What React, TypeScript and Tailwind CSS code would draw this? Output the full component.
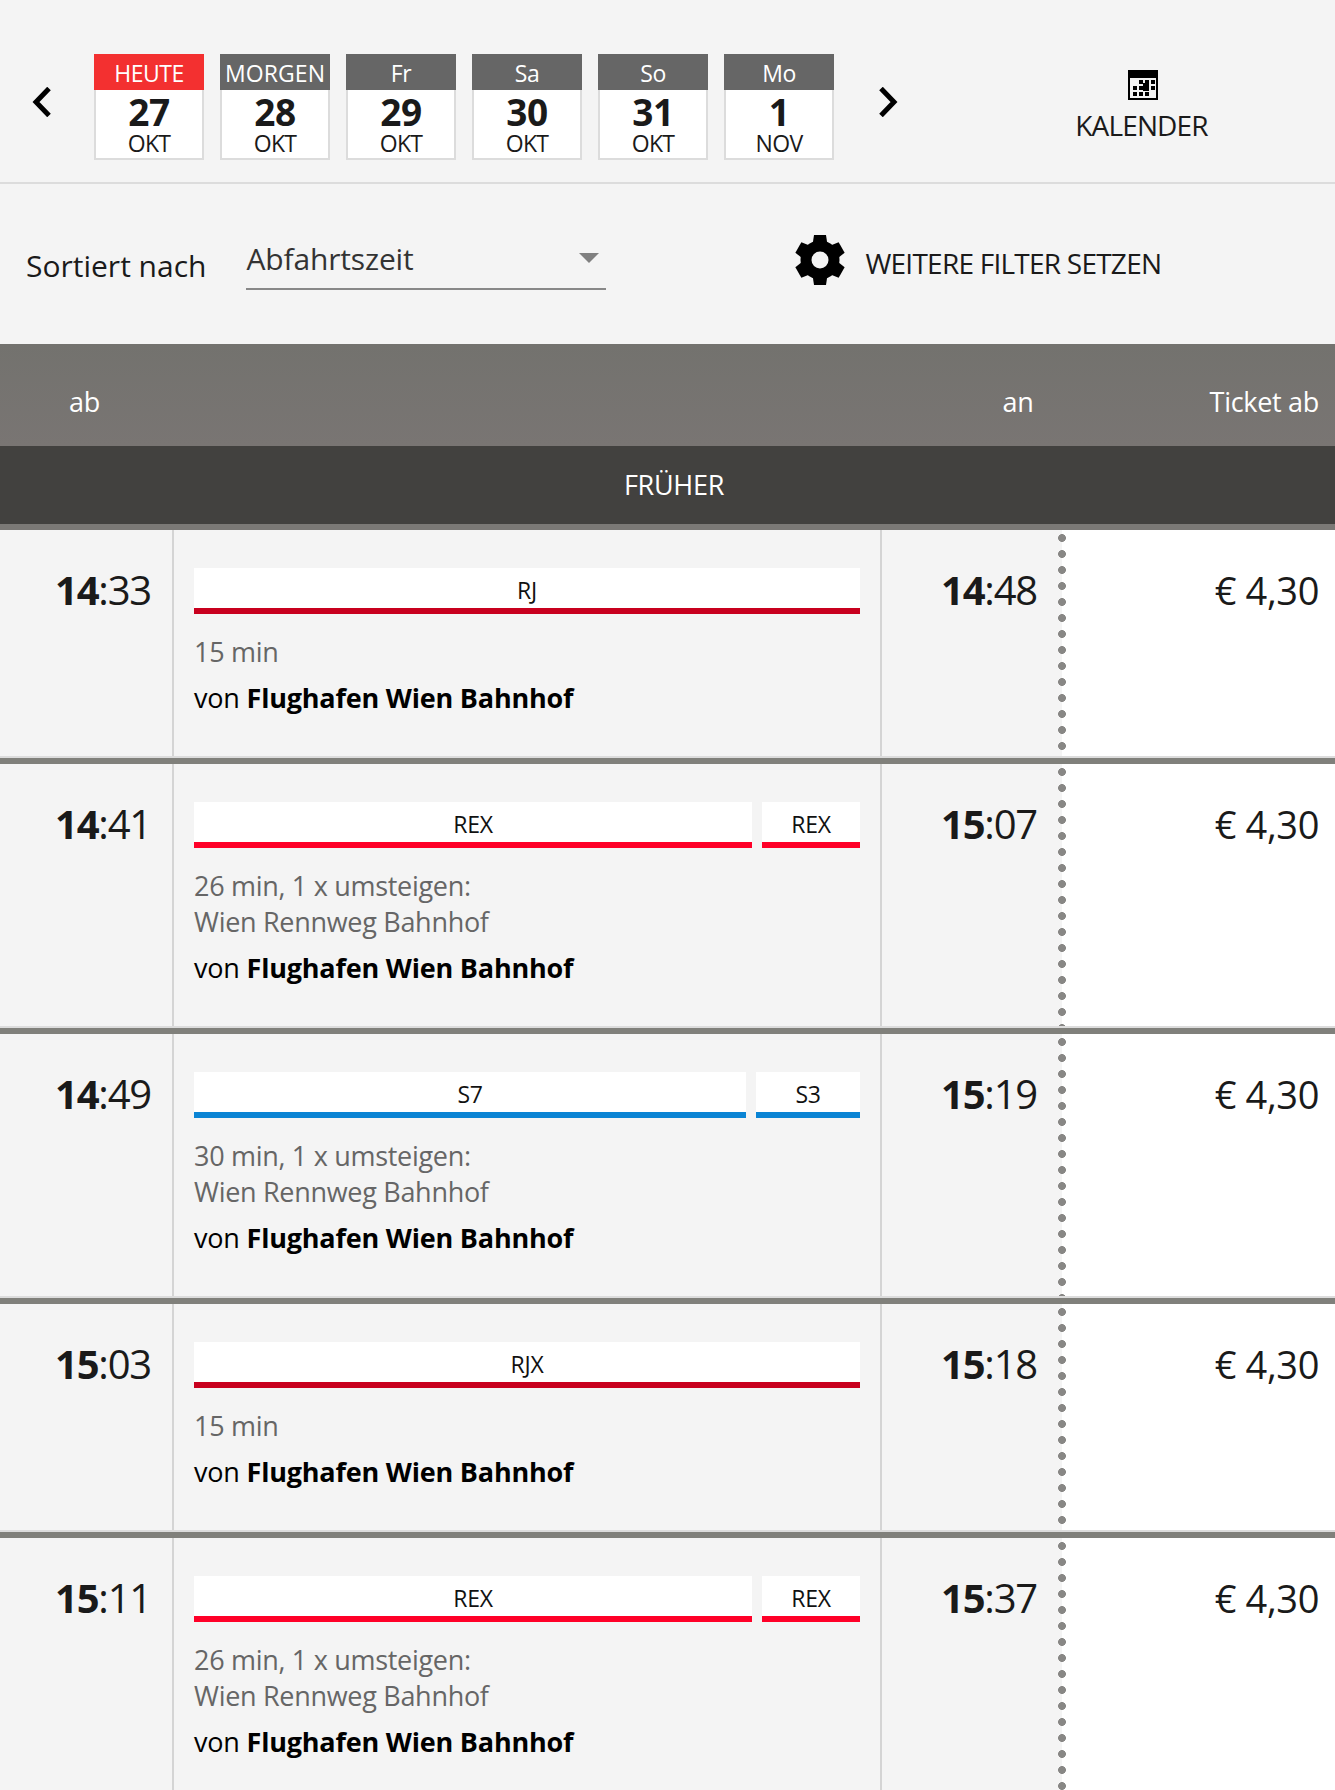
const FONT = "font-['Open_Sans','Noto_Sans',sans-serif]";

const days = [
  { top: "HEUTE", num: "27", mon: "OKT", today: true },
  { top: "MORGEN", num: "28", mon: "OKT" },
  { top: "Fr", num: "29", mon: "OKT" },
  { top: "Sa", num: "30", mon: "OKT" },
  { top: "So", num: "31", mon: "OKT" },
  { top: "Mo", num: "1", mon: "NOV" },
];

type Seg = { name: string; cls: string; grow?: boolean };
type Row = { h: string; dep: [string, string]; arr: [string, string]; segs: Seg[]; info: string[] };

const RJ = "bg-[#c8001e]";
const REX = "bg-[#ff0028]";
const S = "bg-[#0a84d4]";

const rows: Row[] = [
  { h: "h-[226px]", dep: ["14", ":33"], arr: ["14", ":48"], segs: [{ name: "RJ", cls: RJ, grow: true }], info: ["15 min"] },
  { h: "h-[262px]", dep: ["14", ":41"], arr: ["15", ":07"], segs: [{ name: "REX", cls: REX, grow: true }, { name: "REX", cls: REX }], info: ["26 min, 1 x umsteigen:", "Wien Rennweg Bahnhof"] },
  { h: "h-[262px]", dep: ["14", ":49"], arr: ["15", ":19"], segs: [{ name: "S7", cls: S, grow: true }, { name: "S3", cls: S }], info: ["30 min, 1 x umsteigen:", "Wien Rennweg Bahnhof"] },
  { h: "h-[226px]", dep: ["15", ":03"], arr: ["15", ":18"], segs: [{ name: "RJX", cls: RJ, grow: true }], info: ["15 min"] },
  { h: "h-[262px]", dep: ["15", ":11"], arr: ["15", ":37"], segs: [{ name: "REX", cls: REX, grow: true }, { name: "REX", cls: REX }], info: ["26 min, 1 x umsteigen:", "Wien Rennweg Bahnhof"] },
];

function Chevron({ left }: { left?: boolean }) {
  return (
    <svg width="20" height="30" viewBox="0 0 20 30" className="shrink-0">
      <path d={left ? "M17 1.5 L4 15 L17 28.5" : "M3 1.5 L16 15 L3 28.5"} fill="none" stroke="#000" strokeWidth="5" />
    </svg>
  );
}

function CalendarIcon() {
  const cells = [
    [12, 10], [18, 10], [24, 10],
    [6, 16], [12, 16], [18, 16], [24, 16],
    [6, 22], [12, 22], [18, 22],
  ];
  return (
    <svg width="30" height="30" viewBox="0 0 30 30">
      <rect x="0" y="0" width="30" height="30" fill="#000" />
      <rect x="2" y="8" width="26" height="20" fill="#f4f4f4" />
      {cells.map(([x, y]) => (
        <rect key={`${x}-${y}`} x={x - 1} y={y} width="4" height="4" fill="#000" />
      ))}
      <rect x="15" y="13" width="6" height="8" fill="#000" />
    </svg>
  );
}

function Gear() {
  return (
    <svg width="50" height="50" viewBox="0 0 50 50" className="shrink-0">
      {[0, 60, 120, 180, 240, 300].map((a) => (
        <path key={a} d="M19 0 H31 L32.5 10 H17.5 Z" fill="#000" transform={`rotate(${a} 25 25)`} />
      ))}
      <circle cx="25" cy="25" r="14" fill="none" stroke="#000" strokeWidth="11" />
    </svg>
  );
}

function Dots() {
  return <div className="absolute left-[-4px] top-0 bottom-0 w-2 bg-[radial-gradient(circle,#888785_3.6px,transparent_4.2px)] bg-[length:8px_16px] bg-repeat-y" />;
}

export default function App() {
  return (
    <div className={`${FONT} w-[1335px] h-[1790px] overflow-hidden bg-[#f4f4f4] text-[#1a1a1a]`}>
      <div className="h-[184px] border-b-2 border-[#dcdcdc] flex items-start pl-[32px] pt-[54px]">
        <div className="mt-[33px] mr-[42px]"><Chevron left /></div>
        <div className="flex gap-4">
          {days.map((d) => (
            <div key={d.num} className="w-[110px] h-[106px] flex flex-col text-center">
              <div className={`h-[36px] leading-[38px] text-[23px] whitespace-nowrap text-white ${d.top === "MORGEN" ? "tracking-[0.1px]" : "tracking-[-0.5px]"} ${d.today ? "bg-[#f33030]" : "bg-[#666666]"}`}>{d.top}</div>
              <div className="flex-1 bg-white border-2 border-t-0 border-[#dcdcdc] flex flex-col items-center">
                <div className="text-[37px] leading-[38px] font-bold mt-[3px] tracking-[-0.5px]">{d.num}</div>
                <div className="text-[23px] leading-[25px] tracking-[-0.7px]">{d.mon}</div>
              </div>
            </div>
          ))}
        </div>
        <div className="mt-[33px] ml-[44px]"><Chevron /></div>
        <div className="ml-[178px] mt-[16px] w-[131px] flex flex-col items-center">
          <div className="ml-[2px] h-[30px]"><CalendarIcon /></div>
          <div className="text-[28px] leading-[36px] mt-[7px] tracking-[-0.85px] whitespace-nowrap">KALENDER</div>
        </div>
      </div>

      <div className="h-[160px] flex items-start relative">
        <div className="ml-[26px] mt-[62px] text-[30px] leading-[40px] tracking-[0px]">Sortiert nach</div>
        <div className="ml-[40px] mt-[48px] w-[360px] h-[58px] border-b-2 border-[#888] flex justify-between">
          <div className="text-[30px] leading-[54px] tracking-[-0.15px] text-[#333]">Abfahrtszeit</div>
          <div className="mt-[21px] mr-[7px] w-0 h-0 border-x-[10px] border-x-transparent border-t-[10px] border-t-[#808080]" />
        </div>
        <div className="ml-[189px] mt-[51px]"><Gear /></div>
        <div className="ml-[20px] mt-[61px] text-[28px] leading-[36px] tracking-[-0.76px] whitespace-nowrap">WEITERE FILTER SETZEN</div>
      </div>

      <div className="h-[102px] bg-gradient-to-b from-[#73726e] to-[#797573] text-white text-[27px] relative flex items-start pt-[40px] leading-[36px] tracking-[-0.3px]">
        <div className="ml-[69px]">ab</div>
        <div className="ml-auto mr-[176px]">an</div>
        <div className="mr-[16px]">Ticket ab</div>
      </div>
      <div className="h-[84px] bg-[#42413f] border-b-[6px] border-[#7b7976] text-white text-[27px] text-center pl-[13px] pt-[21px] leading-[36px] tracking-[-0.3px]">FRÜHER</div>

      {rows.map((r, i) => (
        <div key={i} className="border-b-[6px] border-[#80807b]">
          <div className={`${r.h} border-b-2 border-[#dcdcdc] flex box-content`}>
            <div className="w-[174px] border-r-2 border-[#d4d4d4] text-right pr-[21px] pt-[35px] text-[40px] leading-[50px] tracking-[-1.2px]">
              <b>{r.dep[0]}</b>{r.dep[1]}
            </div>
            <div className="w-[708px] border-r-2 border-[#d4d4d4] pl-[20px] pr-[20px] pt-[38px]">
              <div className="flex gap-[10px]">
                {r.segs.map((s, j) => (
                  <div key={j} className={`${s.grow ? "flex-1" : s.name === "S3" ? "w-[104px]" : "w-[98px]"} bg-white h-[46px] flex flex-col text-center`}>
                    <div className="h-[40px] leading-[44px] text-[23px] tracking-[-0.3px] text-[#111]">{s.name}</div>
                    <div className={`h-[6px] ${s.cls}`} />
                  </div>
                ))}
              </div>
              <div className="mt-[20px] text-[27px] leading-[36px] tracking-[-0.3px] text-[#666]">
                {r.info.map((l) => <div key={l}>{l}</div>)}
              </div>
              <div className="mt-[10px] text-[27px] leading-[36px] tracking-[-0.2px] text-black">von <b>Flughafen Wien Bahnhof</b></div>
            </div>
            <div className="w-[180px] text-right pr-[25px] pt-[35px] text-[40px] leading-[50px] tracking-[-1.2px]">
              <b>{r.arr[0]}</b>{r.arr[1]}
            </div>
            <div className="w-[273px] bg-white relative text-right pr-[16px] pt-[35px] text-[38px] leading-[50px] tracking-[-0.4px]">
              <Dots />
              € 4,30
            </div>
          </div>
        </div>
      ))}
    </div>
  );
}
